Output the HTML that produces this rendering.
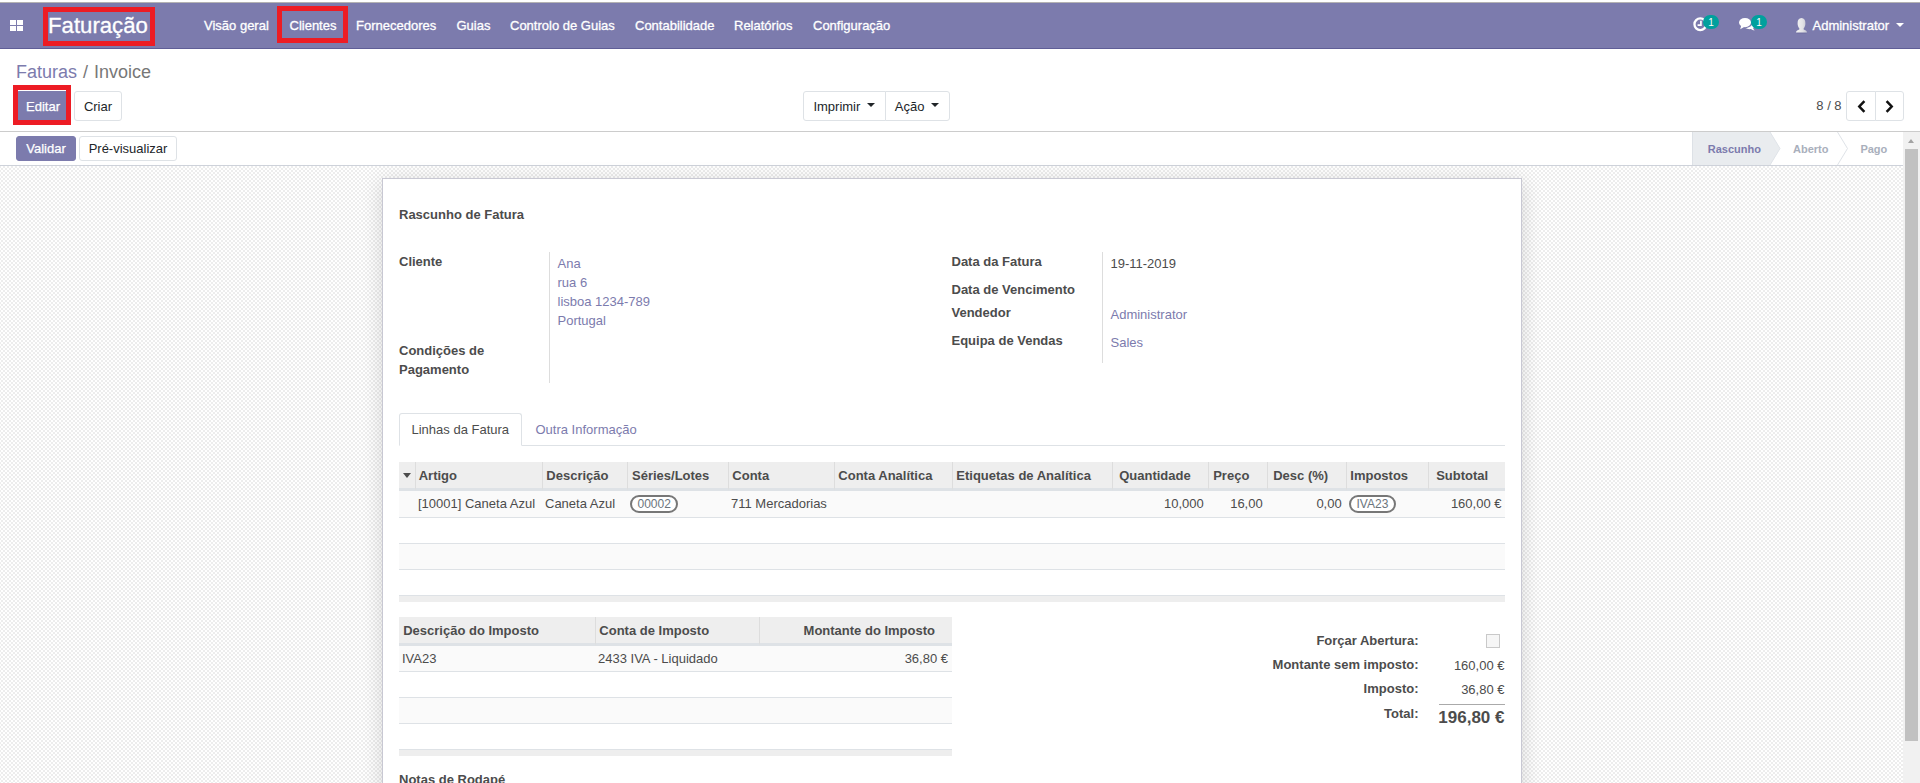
<!DOCTYPE html>
<html lang="pt">
<head>
<meta charset="utf-8">
<title>Faturas / Invoice</title>
<style>
*{box-sizing:border-box}
html,body{margin:0;padding:0}
body{width:1920px;height:783px;overflow:hidden;background:#fff;position:relative;
 font-family:"Liberation Sans",Arial,sans-serif;font-size:13px;color:#4c4c4c;line-height:19px}
.abs{position:absolute;white-space:nowrap}
a{color:#7c7bad;text-decoration:none}
/* navbar */
#topstrip{left:0;top:0;width:1920px;height:3px;background:#fff;border-bottom:1px solid #b4b2b3}
#nav{left:0;top:3px;width:1920px;height:46px;background:#7c7bad;border-bottom:1px solid #5f5e97;color:#fff}
#nav .mi{position:absolute;top:0;height:45px;line-height:45px;color:#fff;font-size:13px;white-space:nowrap;-webkit-text-stroke:.3px #fff}
#brand{position:absolute;left:48px;top:0;height:45px;line-height:45px;font-size:22.2px;color:#fff;-webkit-text-stroke:.3px #fff}
.red{position:absolute;border:5px solid #ed1c24}
.badge{position:absolute;width:16px;height:14px;border-radius:8px;background:#00a09d;color:#fff;font-size:10px;line-height:15.4px;text-align:center}
/* control panel */
#cp{left:0;top:49px;width:1920px;height:83px;background:#fff;border-bottom:1px solid #ccc}
.btn{position:absolute;height:30px;line-height:29px;border:1px solid #dee2e6;border-radius:3px;background:#fff;color:#212529;text-align:center;font-size:13px;white-space:nowrap}
.btn.pri{background:#7c7bad;border-color:#7c7bad;color:#fff;-webkit-text-stroke:.25px #fff}
.caret{display:inline-block;width:0;height:0;border-left:4px solid transparent;border-right:4px solid transparent;border-top:4.5px solid #212529;vertical-align:middle;margin-left:6.6px;position:relative;top:-2.2px}
/* status bar */
#sb{left:0;top:132px;width:1903px;height:34px;background:#fff;border-bottom:1px solid #ced2da}
.sbtn{position:absolute;top:4px;height:25px;line-height:23px;border:1px solid #dee2e6;border-radius:3px;background:#fff;color:#212529;text-align:center}
.sbtn.pri{background:#7c7bad;border-color:#7c7bad;color:#fff;-webkit-text-stroke:.25px #fff}
/* content */
#bg{left:0;top:166px;width:1903px;height:617px;background:conic-gradient(#ededed 25%,#fff 0 50%,#ededed 0 75%,#fff 0) 1px 0/4px 4px}
#sheet{left:382px;top:178px;width:1140px;height:640px;background:#fff;border:1px solid #c8c8d3;box-shadow:0 4px 20px rgba(0,0,0,.15)}
.lbl{font-weight:bold;color:#4c4c4c}
.t{position:absolute;white-space:nowrap;line-height:19px;height:19px}
/* tables */
table{border-collapse:separate;border-spacing:0;table-layout:fixed;position:absolute}
th{background:#eee;font-weight:bold;text-align:left;height:29px;padding:0 4px 0 3.3px;border-left:1px solid #ddd;border-bottom:3px solid #dee2e6;color:#4c4c4c;white-space:nowrap;overflow:hidden;vertical-align:middle;line-height:19px}
th:first-child{border-left:none}
td{height:26px;padding:0 3px;border-bottom:1px solid #dee2e6;white-space:nowrap;overflow:hidden;vertical-align:middle;line-height:19px}
tr.odd td{background:#fafafa}
tr.first td{height:27px;padding-bottom:2px}
tr.last td{height:25px;border-bottom:none}
.r{text-align:right}
.tag{display:inline-block;height:18px;line-height:14px;border:2px solid #777;border-radius:9px;padding:0 5.5px;background:#fff;position:relative;top:.5px;font-size:12px;color:#6c757d;vertical-align:middle}
.tfoot{position:absolute;height:7px;background:#eee;border-top:1px solid #dee2e6}
/* scrollbar */
#scr{left:1903px;top:132px;width:17px;height:651px;background:#f1f1f1}
#thumb{left:1905px;top:149px;width:13px;height:592px;background:#c1c1c1}
</style>
</head>
<body>
<div class="abs" id="nav">
  <svg class="abs" style="left:10px;top:16.5px" width="13" height="11" viewBox="0 0 13 11"><rect x="0" y="0" width="6" height="5" fill="#fff"/><rect x="7" y="0" width="6" height="5" fill="#fff"/><rect x="0" y="6" width="6" height="5" fill="#fff"/><rect x="7" y="6" width="6" height="5" fill="#fff"/></svg>
  <div id="brand">Faturação</div>
  <div class="mi" style="left:204px">Visão geral</div>
  <div class="mi" style="left:289.5px">Clientes</div>
  <div class="mi" style="left:356px">Fornecedores</div>
  <div class="mi" style="left:456.5px">Guias</div>
  <div class="mi" style="left:510px">Controlo de Guias</div>
  <div class="mi" style="left:635px">Contabilidade</div>
  <div class="mi" style="left:734px">Relatórios</div>
  <div class="mi" style="left:813px">Configuração</div>
  <div class="mi" style="left:1812.5px">Administrator</div>
  <svg class="abs" style="left:1693px;top:14px" width="14.6" height="14.6" viewBox="0 0 14 14"><circle cx="7" cy="7" r="5.6" fill="none" stroke="#fff" stroke-width="2.2"/><path d="M7.6 3.6v4.2H4.4" fill="none" stroke="#fff" stroke-width="1.6"/></svg>
  <div class="badge" style="left:1703px;top:12px">1</div>
  <svg class="abs" style="left:1738.5px;top:15.4px" width="16" height="14" viewBox="0 0 16 14"><ellipse cx="6" cy="4.6" rx="6" ry="4.6" fill="#fff"/><path d="M2.2 7.5L1.2 11.2L5.6 8.8z" fill="#fff"/><path d="M13.4 3.7c1.6.8 2.6 2 2.6 3.4 0 1.200-.7 2.200-1.900 3 .2.900.7 1.700 1.500 2.400-1.400-.100-2.700-.600-3.600-1.400-.500.100-1 .100-1.500.100-1.600 0-3-.400-4.100-1.100 3.900-.100 7.100-2.300 7.100-5.300 0-.400 0-.800-.100-1.100z" fill="#fff"/></svg>
  <div class="badge" style="left:1751px;top:12px">1</div>
  <svg class="abs" style="left:1795px;top:15px" width="13" height="16" viewBox="0 0 13 16"><defs><linearGradient id="av" x1="0" y1="0" x2="1" y2="0"><stop offset="0" stop-color="#f4f4f4"/><stop offset=".6" stop-color="#e2e2e6"/><stop offset="1" stop-color="#c4c4d0"/></linearGradient></defs><ellipse cx="6.5" cy="15" rx="5.5" ry="1" fill="#6b6a9c" opacity=".45"/><path d="M6.500 0C9.200 0 10.400 2.200 10.400 5.200 10.400 7.600 9.600 9.300 8.700 10.200L8.700 11.500C10.200 12 11.800 12.600 12 14.600L1 14.600C1.200 12.600 2.800 12 4.300 11.500L4.300 10.200C3.400 9.300 2.600 7.600 2.600 5.200 2.600 2.200 3.800 0 6.500 0z" fill="url(#av)"/></svg>
  <div class="abs" style="left:1896px;top:19.5px;width:0;height:0;border-left:4px solid transparent;border-right:4px solid transparent;border-top:4.5px solid #fff"></div>
</div>
<div class="abs" id="topstrip"></div>
<div class="red" style="left:43px;top:7px;width:112px;height:39px"></div>
<div class="red" style="left:277px;top:6px;width:71px;height:37px"></div>

<div class="abs" id="cp">
  <div class="t" style="left:16px;top:12px;font-size:18px;line-height:22px;height:22px;color:#777"><a>Faturas</a><span style="margin:0 6px 0 6px">/</span>Invoice</div>
  <div class="btn pri" style="left:16px;top:42px;width:54px">Editar</div>
  <div class="btn" style="left:74px;top:42px;width:48px">Criar</div>
  <div class="btn" style="left:803px;top:42px;width:83px;border-radius:3px 0 0 3px;text-align:left;padding-left:9.4px">Imprimir<span class="caret"></span></div>
  <div class="btn" style="left:885px;top:42px;width:65px;border-radius:0 3px 3px 0;text-align:left;padding-left:8.8px">Ação<span class="caret"></span></div>
  <div class="t" style="left:1816.3px;top:47.4px;color:#4c4c4c">8 / 8</div>
  <div class="btn" style="left:1846px;top:42px;width:30px;border-radius:3px 0 0 3px"><svg class="abs" style="left:10px;top:7.5px" width="9" height="13" viewBox="0 0 9 13"><path d="M7.400 1.200L2.300 6.500L7.400 11.800" fill="none" stroke="#111" stroke-width="2.5"/></svg></div>
  <div class="btn" style="left:1875px;top:42px;width:29px;border-radius:0 3px 3px 0"><svg class="abs" style="left:9px;top:7.5px" width="9" height="13" viewBox="0 0 9 13"><path d="M1.600 1.200L6.700 6.500L1.600 11.800" fill="none" stroke="#111" stroke-width="2.5"/></svg></div>
</div>
<div class="red" style="left:13px;top:85px;width:58px;height:40px"></div>

<div class="abs" id="sb">
  <div class="sbtn pri" style="left:16px;width:60px">Validar</div>
  <div class="sbtn" style="left:79px;width:98px">Pré-visualizar</div>
  <svg class="abs" style="left:1692px;top:0" width="211" height="33" viewBox="0 0 211 33"><path d="M0 0H78L88 16.500L78 33H0z" fill="#e9ecef"/><path d="M0.500 0V33" fill="none" stroke="#dde1e6" stroke-width="1"/><path d="M78 0L88 16.500L78 33" fill="none" stroke="#dfe3e8" stroke-width="1"/><path d="M145.500 0L155.500 16.500L145.500 33" fill="none" stroke="#dfe3e8" stroke-width="1"/><text x="15.800" y="20.500" font-family="Liberation Sans, Arial, sans-serif" font-size="11" font-weight="bold" fill="#7c7bad">Rascunho</text><text x="101" y="20.500" font-family="Liberation Sans, Arial, sans-serif" font-size="11" font-weight="bold" fill="#a9afbc">Aberto</text><text x="168.400" y="20.500" font-family="Liberation Sans, Arial, sans-serif" font-size="11" font-weight="bold" fill="#a9afbc">Pago</text></svg>
</div>

<div class="abs" id="bg"></div>
<div class="abs" id="sheet"></div>


<!-- form header -->
<div class="t lbl" style="left:399px;top:205px">Rascunho de Fatura</div>
<div class="abs" style="left:549px;top:252px;width:1px;height:131px;background:#ddd"></div>
<div class="t lbl" style="left:399px;top:252px">Cliente</div>
<div class="t" style="left:557.500px;top:254px"><a>Ana</a></div>
<div class="t" style="left:557.500px;top:273px"><a>rua 6</a></div>
<div class="t" style="left:557.500px;top:292px"><a>lisboa 1234-789</a></div>
<div class="t" style="left:557.500px;top:311px"><a>Portugal</a></div>
<div class="t lbl" style="left:399px;top:341px">Condições de</div>
<div class="t lbl" style="left:399px;top:360px">Pagamento</div>

<div class="abs" style="left:1102px;top:252px;width:1px;height:111px;background:#ddd"></div>
<div class="t lbl" style="left:951.500px;top:252px">Data da Fatura</div>
<div class="t" style="left:1110.500px;top:254px">19-11-2019</div>
<div class="t lbl" style="left:951.500px;top:280px">Data de Vencimento</div>
<div class="t lbl" style="left:951.500px;top:303px">Vendedor</div>
<div class="t" style="left:1110.500px;top:305px"><a>Administrator</a></div>
<div class="t lbl" style="left:951.500px;top:331px">Equipa de Vendas</div>
<div class="t" style="left:1110.500px;top:333px"><a>Sales</a></div>

<!-- tabs -->
<div class="abs" style="left:399px;top:445px;width:1106px;height:1px;background:#dee2e6"></div>
<div class="abs" style="left:399px;top:413px;width:123px;height:33px;border:1px solid #dee2e6;border-bottom-color:#fff;border-radius:3px 3px 0 0;background:#fff"></div>
<div class="t" style="left:411.500px;top:420px;color:#4c4c4c">Linhas da Fatura</div>
<div class="t" style="left:535.500px;top:420px"><a>Outra Informação</a></div>

<!-- invoice lines -->
<table style="left:399px;top:462px;width:1106px">
<colgroup><col style="width:16px"><col style="width:127px"><col style="width:85px"><col style="width:101px"><col style="width:106px"><col style="width:118px"><col style="width:160px"><col style="width:96px"><col style="width:59px"><col style="width:79px"><col style="width:82px"><col style="width:77px"></colgroup>
<thead><tr>
<th style="padding:0"><span style="display:inline-block;margin-left:4px;width:0;height:0;border-left:4.5px solid transparent;border-right:4.5px solid transparent;border-top:5px solid #4c4c4c;vertical-align:2px"></span></th>
<th style="border-left:1px solid #ddd;padding-left:2.7px">Artigo</th><th>Descrição</th><th style="padding-left:4px">Séries/Lotes</th><th>Conta</th><th>Conta Analítica</th><th>Etiquetas de Analítica</th><th style="padding-left:6.2px">Quantidade</th><th style="padding-left:4.2px">Preço</th><th style="padding-left:5.2px">Desc (%)</th><th>Impostos</th><th style="padding-left:7.2px">Subtotal</th>
</tr></thead>
<tbody>
<tr class="odd first"><td></td><td>[10001] Caneta Azul</td><td>Caneta Azul</td><td><span class="tag">00002</span></td><td>711 Mercadorias</td><td></td><td></td><td class="r" style="padding-right:4.3px">10,000</td><td class="r" style="padding-right:4.3px">16,00</td><td class="r" style="padding-right:4.3px">0,00</td><td><span class="tag">IVA23</span></td><td class="r" style="padding-right:3.5px">160,00 €</td></tr>
<tr><td colspan="12"></td></tr>
<tr class="odd"><td colspan="12"></td></tr>
<tr class="last"><td colspan="12"></td></tr>
</tbody>
</table>
<div class="tfoot" style="left:399px;top:595px;width:1106px"></div>

<!-- tax lines -->
<table style="left:399px;top:617px;width:553px">
<colgroup><col style="width:196px"><col style="width:164px"><col style="width:193px"></colgroup>
<thead><tr><th style="padding-left:4.2px">Descrição do Imposto</th><th>Conta de Imposto</th><th class="r" style="padding-right:17px">Montante do Imposto</th></tr></thead>
<tbody>
<tr class="odd"><td style="padding-bottom:1px">IVA23</td><td style="padding-bottom:1px">2433 IVA - Liquidado</td><td class="r" style="padding-right:4px;padding-bottom:1px">36,80 €</td></tr>
<tr><td colspan="3"></td></tr>
<tr class="odd"><td colspan="3"></td></tr>
<tr class="last"><td colspan="3"></td></tr>
</tbody>
</table>
<div class="tfoot" style="left:399px;top:749px;width:553px"></div>
<div class="t lbl" style="left:399px;top:770.4px">Notas de Rodapé</div>

<!-- totals -->
<div class="t lbl" style="right:501.5px;top:630.7px">Forçar Abertura:</div>
<div class="abs" style="left:1486px;top:634px;width:14px;height:14px;border:1px solid #c9c9c9;background:#f6f6f6"></div>
<div class="t lbl" style="right:501.5px;top:655.2px">Montante sem imposto:</div>
<div class="t" style="right:415.500px;top:655.500px">160,00 €</div>
<div class="t lbl" style="right:501.5px;top:679.2px">Imposto:</div>
<div class="t" style="right:415.500px;top:679.500px">36,80 €</div>
<div class="abs" style="left:1439px;top:704px;width:66px;height:1px;background:#aaa"></div>
<div class="t lbl" style="right:501.5px;top:703.6px">Total:</div>
<div class="t lbl" style="right:415.500px;top:707px;font-size:17px;line-height:22px;height:22px">196,80 €</div>

<div class="abs" id="scr"></div>
<div class="abs" id="thumb"></div>
<div class="abs" style="left:1908px;top:139px;width:0;height:0;border-left:3.5px solid transparent;border-right:3.5px solid transparent;border-bottom:4px solid #a3a3a3"></div>
</body>
</html>
